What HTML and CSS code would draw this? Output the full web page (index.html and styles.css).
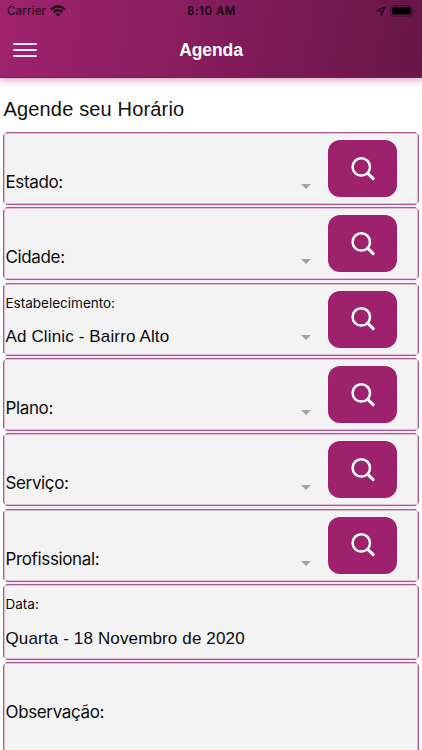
FILE: index.html
```
<!DOCTYPE html>
<html lang="pt-BR">
<head>
<meta charset="utf-8">
<title>Agenda</title>
<link rel="stylesheet" href="styles.css">
</head>
<body>
<svg class="defs" width="0" height="0">
  <symbol id="search" viewBox="0 0 26 26"><circle cx="11.3" cy="10.9" r="8.7" fill="none" stroke="#fff" stroke-width="2.5"/><path d="M17.8 17.4l5.4 5.2" stroke="#fff" stroke-width="3" stroke-linecap="round"/></symbol>
</svg>
<header class="header">
  <div class="status">
    <div class="carrier"><span>Carrier</span>
      <svg width="16" height="12" viewBox="0 0 16 12"><g fill="none" stroke="#160411" stroke-width="2.2"><path d="M1 4.4Q8-1.8 15 4.4"/><path d="M3.6 7.1Q8 3.2 12.4 7.1"/></g><path d="M5.7 9.1Q8 7.2 10.3 9.1L8 11.5z" fill="#160411"/></svg>
    </div>
    <div class="time">8:10 AM</div>
    <div class="indicators">
      <svg width="10" height="10" viewBox="0 0 10 10"><path d="M.9 4.7L9 1 5.4 9.1 4.9 5.2z" fill="none" stroke="#160411" stroke-width="1.1" stroke-linejoin="round"/></svg>
      <svg width="26" height="12" viewBox="0 0 26 12"><rect x=".7" y=".6" width="21.6" height="10.6" rx="2.8" fill="none" stroke="#40102f" stroke-width="1"/><rect x="2.3" y="2.2" width="18.4" height="7.4" rx="1.2" fill="#000"/><path d="M23.7 4.2q1.4 1.7 0 3.4z" fill="#40102f"/></svg>
    </div>
  </div>
  <div class="nav">
    <div class="menu"><i></i><i></i><i></i></div>
    <h1>Agenda</h1>
  </div>
</header>
<main>
  <h2>Agende seu Horário</h2>
  <div class="cards">
    <section class="card"><div class="field"><span class="name">Estado:</span></div><b class="arrow"></b><button><svg width="26" height="26"><use href="#search"/></svg></button></section>
    <section class="card"><div class="field"><span class="name">Cidade:</span></div><b class="arrow"></b><button><svg width="26" height="26"><use href="#search"/></svg></button></section>
    <section class="card"><div class="field"><span class="small">Estabelecimento:</span><span class="value">Ad Clinic - Bairro Alto</span></div><b class="arrow"></b><button><svg width="26" height="26"><use href="#search"/></svg></button></section>
    <section class="card"><div class="field"><span class="name">Plano:</span></div><b class="arrow"></b><button><svg width="26" height="26"><use href="#search"/></svg></button></section>
    <section class="card"><div class="field"><span class="name">Serviço:</span></div><b class="arrow"></b><button><svg width="26" height="26"><use href="#search"/></svg></button></section>
    <section class="card"><div class="field"><span class="name">Profissional:</span></div><b class="arrow"></b><button><svg width="26" height="26"><use href="#search"/></svg></button></section>
    <section class="card date"><div class="field"><span class="small">Data:</span><span class="value">Quarta - 18 Novembro de 2020</span></div></section>
    <section class="card notes"><div class="field"><span class="name">Observação:</span></div></section>
  </div>
</main>
</body>
</html>
```
FILE: styles.css
```
* { box-sizing: border-box; }
html, body { height: 750px; overflow: hidden; }
body { margin: 0; background: #fff; color: #0c0c0c; font-family: "Liberation Sans", Arial, sans-serif; }
.defs { display: block; }
.header { height: 78px; background: linear-gradient(100deg, #a0226f 0%, #671648 100%); box-shadow: 0 2px 8px rgba(160, 34, 111, .45); border-bottom: 1px solid #7b1c55; }
.status { height: 22px; display: grid; grid-template-columns: 1fr auto 1fr; align-items: center; padding: 0 6px 0 7px; color: #160411; font: 11.5px/22px Inter, sans-serif; }
.carrier { display: flex; align-items: center; gap: 5px; letter-spacing: .2px; }
.carrier svg { margin: -1px 0 0 -1px; }
.time { font-weight: 600; letter-spacing: .5px; }
.indicators { display: flex; justify-content: flex-end; align-items: center; gap: 4px; }
.nav { height: 56px; display: grid; grid-template-columns: 1fr auto 1fr; align-items: center; padding: 0 13px; }
.menu { width: 24px; display: grid; gap: 4px; }
.menu i { height: 2px; border-radius: 1px; background: #fbeaf5; }
h1 { margin: 0; color: #fff; font-size: 17.5px; line-height: 22px; font-weight: 700; letter-spacing: -.1px; }
main { padding: 18px 3px 0; }
h2 { margin: 0; font-size: 20px; line-height: 26px; font-weight: 400; letter-spacing: .16px; padding-left: .5px; color: #111; }
.cards { display: flex; flex-direction: column; gap: 2.35px; margin-top: 10px; }
.card { position: relative; height: 73px; flex: none; display: flex; align-items: flex-start; background: #f3f3f3; border: 1px solid #a85a90; border-radius: 4px; box-shadow: inset 0 0 0 .5px #c989b5; padding: 0 21px 0 1.5px; }
/* softened corner notches */
.card::before { content: ""; position: absolute; inset: -1px; background: radial-gradient(circle at 0 0, #fff 2.2px, transparent 3.2px) 0 0, radial-gradient(circle at 100% 0, #fff 2.2px, transparent 3.2px) 100% 0, radial-gradient(circle at 0 100%, #fff 2.2px, transparent 3.2px) 0 100%, radial-gradient(circle at 100% 100%, #fff 2.2px, transparent 3.2px) 100% 100%; background-size: 4px 4px; background-repeat: no-repeat; }
/* pale strip separating neighbouring cards */
.card::after { content: ""; position: absolute; left: 3px; right: 3px; bottom: -3px; height: 2px; background: #f7e6f5; }
.field { flex: 1; height: 100%; display: flex; flex-direction: column; }
.name { font: 17px/22px Inter, sans-serif; margin-top: 38px; letter-spacing: -.36px; }
.small { font: 13.5px/18px Inter, sans-serif; margin-top: 10px; letter-spacing: 0; }
.value { font-size: 17px; line-height: 20px; margin-top: 15px; letter-spacing: .14px; }
.arrow { width: 0; margin: 51px 17px 0 0; border: 5px solid transparent; border-top-color: #a3a3a3; border-bottom: 0; }
button { width: 69px; height: 57px; margin: 7px 0 0; padding: 0; border: 0; border-radius: 12px; background: #9e216d; display: grid; place-items: center; }
.date { height: 75.5px; }
.date .value { margin-top: 16px; }
.notes { height: 110px; }
```
